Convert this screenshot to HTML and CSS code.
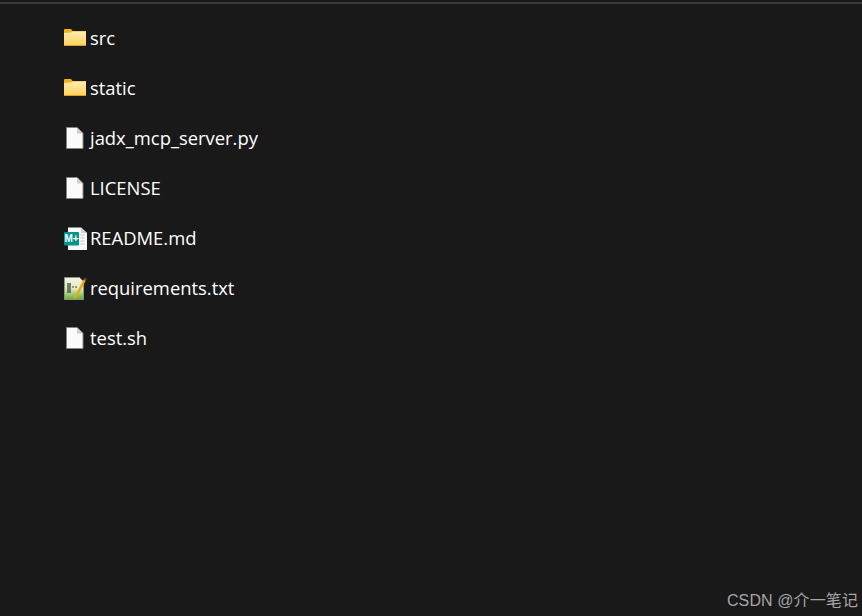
FILE: index.html
```html
<!DOCTYPE html>
<html lang="zh-CN">
<head>
    <meta charset="UTF-8">
    <title>jadx-mcp-server</title>
    <link rel="stylesheet" href="styles.css">
</head>
<body>
    <div class="top-line"></div>

    <svg class="defs" width="0" height="0">
        <defs>
            <linearGradient id="folder-front" x1="0" y1="0" x2="0" y2="1">
                <stop offset="0" stop-color="#ffeeb0"/>
                <stop offset="1" stop-color="#ffd057"/>
            </linearGradient>
            <linearGradient id="note-paper" x1="0" y1="0" x2="0" y2="1">
                <stop offset="0" stop-color="#f2f4e8"/>
                <stop offset=".5" stop-color="#dfecc0"/>
                <stop offset="1" stop-color="#62ad2c"/>
            </linearGradient>
            <symbol id="folder" viewBox="0 0 24 24">
                <path d="M1 4a1 1 0 0 1 1-1h6l1.5 2H23v15H1z" fill="#f4b01c"/>
                <path d="M9 5h14v2H7z" fill="#e8ab2e"/>
                <path d="M1 7l7-.5L9.5 5.500H23V19.5a.5.5 0 0 1-.5.5h-21a.5.5 0 0 1-.5-.5z" fill="url(#folder-front)"/>
                <path d="M1 19h22v.5a.5.5 0 0 1-.5.5h-21a.5.5 0 0 1-.5-.5z" fill="#d99f2f"/>
            </symbol>
            <symbol id="page" viewBox="0 0 24 24">
                <path d="M3.5 1.500h10.500l6 6v15h-16.500z" fill="#fbfbfb" stroke="#858585"/>
                <path d="M14 1.500v6h6z" fill="#cfcfcf"/>
            </symbol>
        </defs>
    </svg>

    <ul class="file-list">
        <li class="file-row">
            <svg class="icon"><use href="#folder"/></svg>
            <span class="file-name">src</span>
        </li>
        <li class="file-row">
            <svg class="icon"><use href="#folder"/></svg>
            <span class="file-name">static</span>
        </li>
        <li class="file-row">
            <svg class="icon"><use href="#page"/></svg>
            <span class="file-name">jadx_mcp_server.py</span>
        </li>
        <li class="file-row">
            <svg class="icon"><use href="#page"/></svg>
            <span class="file-name">LICENSE</span>
        </li>
        <li class="file-row">
            <svg class="icon" viewBox="0 0 24 24">
                <path d="M5 1.500h13l6 5.500v17H5z" fill="#f8f8f8"/>
                <path d="M18 1.500V7h6z" fill="#d2d2d2"/>
                <path d="M17.5 9h4M17.5 12h4M17.5 15h4M17.5 18h4" stroke="#c4c4c4"/>
                <rect x="1" y="6" width="15" height="13.500" rx="1" fill="#00968a"/>
                <text class="md-badge" x="8.500" y="16">M+</text>
            </svg>
            <span class="file-name">README.md</span>
        </li>
        <li class="file-row">
            <svg class="icon" viewBox="0 0 24 24">
                <path d="M1.5 1.500h15l4 4v18h-19z" fill="url(#note-paper)" stroke="#8a9679"/>
                <path d="M5 7v10M7 7v10" stroke="#2d2d2d" stroke-width="1.200"/>
                <path d="M9 11h2M12 11h2" stroke="#444" stroke-width="1.200"/>
                <path d="M11.5 20.500l9-17 2.200 1.200-9 17-2.500 1.200z" fill="#eba51f"/>
                <path d="M20.5 3.500l1-1.800 2.200 1.200-1 1.800z" fill="#9c3d2c"/>
            </svg>
            <span class="file-name">requirements.txt</span>
        </li>
        <li class="file-row">
            <svg class="icon"><use href="#page"/></svg>
            <span class="file-name">test.sh</span>
        </li>
    </ul>

    <div class="watermark">CSDN @介一笔记</div>
</body>
</html>
```

FILE: styles.css
```css
html, body {
    height: 100%;
}
body {
    margin: 0;
    background-color: #191919;
    color: #fff;
    font-family: "Open Sans", "Noto Sans CJK SC", sans-serif;
    display: flex;
    flex-direction: column;
    overflow: hidden;
}
.defs {
    display: block;
    height: 0;
}
.top-line {
    height: 2px;
    margin-top: 2px;
    background-color: #3a3a3a;
}
.file-list {
    list-style: none;
    margin: 9px 0 0;
    padding: 0 0 0 63px;
    flex: 1;
}
.file-row {
    height: 50px;
    display: flex;
    align-items: center;
    gap: 3px;
    font-size: 18.4px;
}
.file-name {
    margin-bottom: 2px;
}
.icon {
    width: 24px;
    height: 24px;
}
.md-badge {
    font-family: "Liberation Sans", sans-serif;
    font-size: 10px;
    font-weight: bold;
    fill: #fff;
    text-anchor: middle;
}
.watermark {
    align-self: flex-end;
    margin: 0 4px 5px 0;
    font-family: "Liberation Sans", "Noto Sans CJK SC", sans-serif;
    font-size: 16px;
    letter-spacing: .1px;
    color: #a6a6a6;
}
```
